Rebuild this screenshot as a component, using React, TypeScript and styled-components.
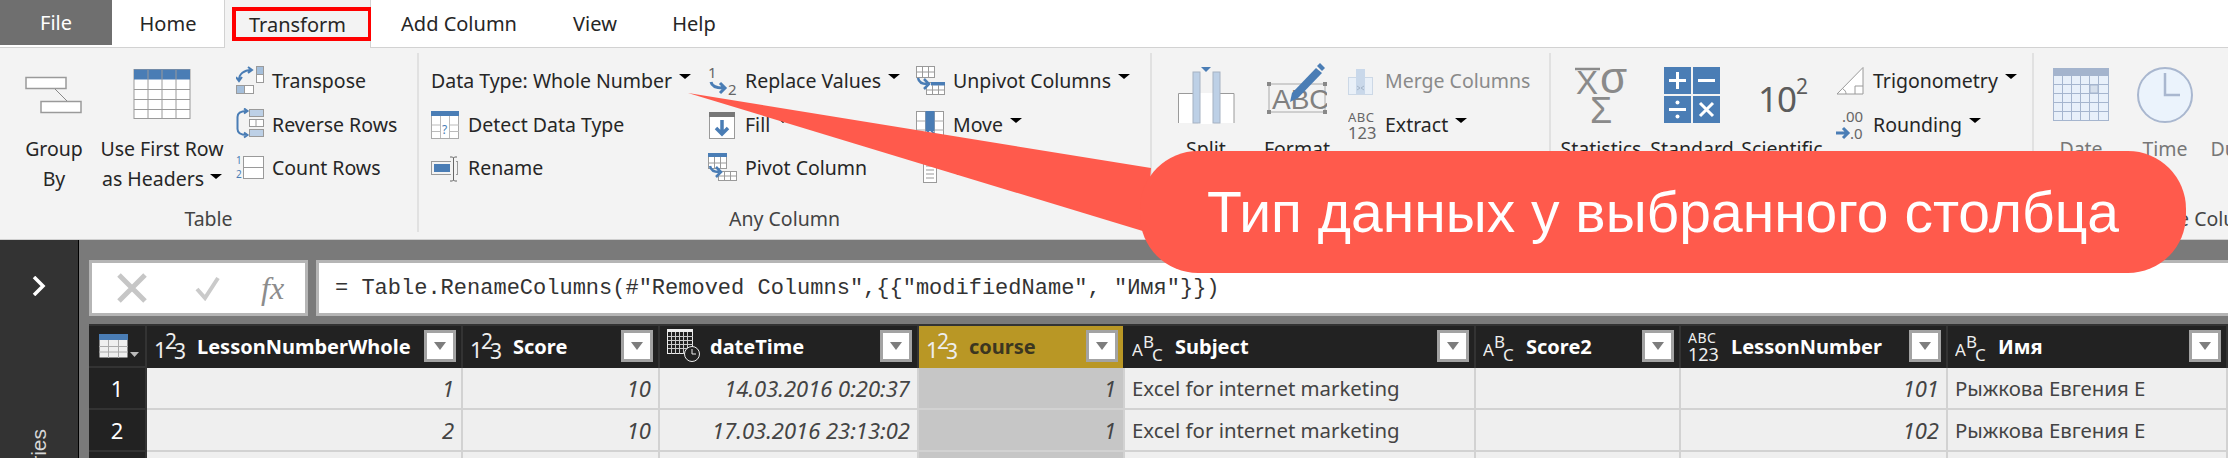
import React from 'react'
import styled, { createGlobalStyle } from 'styled-components'

const BLUE = '#4a7db5'
const PALE = '#bdd0e6'
const LINE = '#9a9a9a'

const GlobalStyle = createGlobalStyle`
  html, body { margin: 0; padding: 0; background: #fff; }
  body { font-family: "Noto Sans", "Liberation Sans", sans-serif; }
`

const Page = styled.div`
  position: relative;
  width: 2228px;
  height: 458px;
  overflow: hidden;
  display: flex;
  flex-direction: column;
  font-size: 19.5px;
  color: #262626;
`

/* ---------- tabs ---------- */

const TabBar = styled.div`
  display: flex;
  height: 47px;
  border-bottom: 1px solid #d2d2d2;
  background: #fff;
`

const Tab = styled.div<{ $w: number; $active?: boolean; $file?: boolean }>`
  position: relative;
  width: ${p => p.$w}px;
  height: ${p => (p.$file ? 45 : p.$active ? 48 : 47)}px;
  display: flex;
  align-items: center;
  justify-content: center;
  box-sizing: border-box;
  font-size: 20px;
  background: ${p => (p.$file ? '#6f6f6f' : p.$active ? '#f3f3f3' : '#fff')};
  color: ${p => (p.$file ? '#fff' : '#262626')};
  border-left: ${p => (p.$active ? '1px solid #d2d2d2' : 'none')};
  border-right: ${p => (p.$active ? '1px solid #d2d2d2' : 'none')};
`

const RedMark = styled.div`
  position: absolute;
  left: 7px;
  top: 7px;
  width: 140px;
  height: 34px;
  box-sizing: border-box;
  border: 4px solid #f00;
`

/* ---------- ribbon ---------- */

const Ribbon = styled.div`
  display: flex;
  height: 192px;
  box-sizing: border-box;
  padding-top: 5px;
  background: #f3f3f3;
  border-bottom: 1px solid #cfcfcf;
`

const Group = styled.div<{ $w: number }>`
  flex: none;
  width: ${p => p.$w}px;
  height: 179px;
  box-sizing: border-box;
  padding-top: 7px;
  border-right: 2px solid #e1e1e1;
  display: flex;
  flex-direction: column;
`

const GroupBody = styled.div<{ $pad: number }>`
  flex: 1;
  display: flex;
  padding-left: ${p => p.$pad}px;
`

const GroupLabel = styled.div`
  height: 27px;
  line-height: 28px;
  text-align: center;
  white-space: nowrap;
  color: #444;
`

const LargeButton = styled.div<{ $w: number; $muted?: boolean }>`
  flex: none;
  width: ${p => p.$w}px;
  display: flex;
  flex-direction: column;
  align-items: center;
  line-height: 30px;
  white-space: nowrap;
  text-align: center;
  color: ${p => (p.$muted ? '#777' : '#262626')};

  svg {
    display: block;
    margin-bottom: 4px;
  }
`

const SmallColumn = styled.div<{ $w?: number; $ml?: number }>`
  flex: none;
  width: ${p => (p.$w ? `${p.$w}px` : 'auto')};
  margin-left: ${p => p.$ml ?? 0}px;
  margin-top: -1px;
`

const SmallRow = styled.div<{ $muted?: boolean }>`
  height: 43.5px;
  display: flex;
  align-items: center;
  gap: 8px;
  white-space: nowrap;
  color: ${p => (p.$muted ? '#8a8a8a' : '#262626')};

  svg {
    flex: none;
    transform: translateY(1px);
  }
`

const Caret = styled.span`
  flex: none;
  display: inline-block;
  width: 0;
  height: 0;
  margin-left: -1px;
  transform: translateY(-4px);
  border-left: 6px solid transparent;
  border-right: 6px solid transparent;
  border-top: 5px solid #000;
`

const InlineCaret = styled(Caret)`
  margin-left: 6px;
  vertical-align: middle;
`

/* ---------- lower part ---------- */

const Lower = styled.div`
  flex: 1;
  min-height: 0;
  display: flex;
  background: #7a7a7a;
`

const Sidebar = styled.div`
  flex: none;
  width: 78px;
  border-right: 1px solid #000;
  background: #333;
  overflow: hidden;
  display: flex;
  flex-direction: column;
  align-items: center;
  padding-top: 36px;

  svg {
    flex: none;
    display: block;
  }
`

const QueriesLabel = styled.div`
  flex: none;
  margin-top: 133px;
  writing-mode: vertical-rl;
  transform: rotate(180deg);
  font-family: "Liberation Sans", sans-serif;
  font-size: 21px;
  line-height: 22px;
  color: #d8d8d8;
`

const Main = styled.div`
  flex: 1;
  min-width: 0;
  padding: 20px 0 0 10px;
  display: flex;
  flex-direction: column;
  gap: 8px;
`

const FormulaBar = styled.div`
  display: flex;
  gap: 8px;
  height: 56px;
  flex: none;
`

const FormulaTools = styled.div`
  flex: none;
  width: 219px;
  box-sizing: border-box;
  border: 3px solid #b5b5b5;
  background: #fff;
  display: flex;
  align-items: center;
  padding-left: 24px;
  gap: 47px;
`

const FxLabel = styled.span`
  font-family: "Liberation Serif", serif;
  font-style: italic;
  font-size: 32px;
  margin-left: -7px;
  color: #8c8c8c;
`

const FormulaInput = styled.div`
  flex: 1;
  box-sizing: border-box;
  border: 3px solid #b5b5b5;
  border-right: none;
  background: #fff;
  display: flex;
  align-items: center;
  padding-left: 16px;
  font-family: "Liberation Mono", monospace;
  font-size: 22px;
  color: #333;
  white-space: pre;
`

const Table = styled.div`
  flex: none;
  display: grid;
  grid-template-columns: 58px 316px 197px 259px 206px 351px 205px 267px 280px;
  grid-auto-rows: 42px;
  padding-top: 2px;
  background: #333;
`

const CornerCell = styled.div`
  background: #222;
  border-right: 2px solid #333;
  border-bottom: 2px solid #333;
  box-sizing: border-box;
  display: flex;
  align-items: center;
  padding-left: 10px;
`

const HeaderCell = styled.div<{ $selected?: boolean }>`
  display: flex;
  align-items: center;
  box-sizing: border-box;
  padding: 0 5px 2px 7px;
  background: ${p => (p.$selected ? '#b99725' : '#222')};
  border-right: 2px solid ${p => (p.$selected ? '#222' : '#333')};
  color: ${p => (p.$selected ? '#3b3620' : '#fff')};
  font-weight: 700;
  font-size: 20px;
  white-space: nowrap;
`

const TypeSlot = styled.span`
  flex: none;
  width: 43px;
  display: flex;
  align-items: center;
`

const HeaderName = styled.span`
  flex: 1;
  min-width: 0;
`

const FilterButton = styled.span`
  flex: none;
  width: 32px;
  height: 32px;
  box-sizing: border-box;
  border: 3px solid #a3a3a3;
  background: #fff;
  display: flex;
  align-items: center;
  justify-content: center;

  &::before {
    content: '';
    width: 0;
    height: 0;
    border-left: 6px solid transparent;
    border-right: 6px solid transparent;
    border-top: 8px solid #7d7d7d;
  }
`

const RowNumber = styled.div`
  background: #222;
  border-right: 2px solid #333;
  border-bottom: 2px solid #333;
  box-sizing: border-box;
  color: #fff;
  font-size: 22px;
  display: flex;
  align-items: center;
  justify-content: center;
`

const DataCell = styled.div<{ $num?: boolean; $selected?: boolean }>`
  box-sizing: border-box;
  background: ${p => (p.$selected ? '#c6c6c6' : '#efefef')};
  border-right: 2px solid #d2d2d2;
  border-bottom: 2px solid #d2d2d2;
  display: flex;
  align-items: center;
  justify-content: ${p => (p.$num ? 'flex-end' : 'flex-start')};
  padding: 0 7px;
  font-size: ${p => (p.$num ? 22 : 20.4)}px;
  font-style: ${p => (p.$num ? 'italic' : 'normal')};
  color: #444;
  white-space: nowrap;
`

/* ---------- callout ---------- */

const Tail = styled.svg`
  position: absolute;
  left: 0;
  top: 0;
  pointer-events: none;
`

const Bubble = styled.div`
  position: absolute;
  left: 1140px;
  top: 151px;
  width: 1046px;
  height: 122px;
  border-radius: 58px;
  background: #ff5a4c;
  color: #fff;
  font-family: "Liberation Sans", sans-serif;
  font-size: 57px;
  display: flex;
  align-items: center;
  justify-content: center;
  white-space: nowrap;
`

/* ---------- icons ---------- */

const IconText = styled.text`
  font-family: "Noto Sans", "Liberation Sans", sans-serif;
`

const GroupByIcon = () => (
  <svg width="60" height="70">
    <g fill="#fff" stroke={LINE} strokeWidth="1.5">
      <rect x="2" y="17.5" width="40" height="11" />
      <rect x="17" y="41.5" width="40" height="11" />
    </g>
    <line x1="31" y1="29" x2="43" y2="41" stroke="#888" />
  </svg>
)

const FirstRowIcon = () => (
  <svg width="58" height="70">
    <rect x="1" y="9.5" width="56" height="49" fill="#fff" stroke={LINE} />
    <rect x="1" y="9.5" width="56" height="10" fill={BLUE} />
    <path d="M15 10v48M29 10v48M43 10v48M1 29.5h56M1 39.5h56M1 49.5h56" stroke={LINE} fill="none" />
  </svg>
)

const TransposeIcon = () => (
  <svg width="28" height="34">
    <rect x="20.5" y="1.5" width="7" height="16" fill="#fff" stroke={LINE} />
    <rect x="20.5" y="1.5" width="7" height="8" fill="#a5bfdb" stroke={LINE} />
    <rect x="0.5" y="20.5" width="17" height="8" fill="#fff" stroke={LINE} />
    <rect x="0.5" y="20.5" width="8" height="8" fill="#a5bfdb" stroke={LINE} />
    <path d="M3 15C3 9 8 5 15 5M12 2l4 3-4 3M0 12l3 4 3-4" stroke={BLUE} strokeWidth="2" fill="none" />
  </svg>
)

const ReverseIcon = () => (
  <svg width="28" height="34">
    <rect x="13.5" y="1.5" width="14" height="7" fill={PALE} stroke={LINE} />
    <rect x="13.5" y="11.5" width="14" height="7" fill="#fff" stroke={LINE} />
    <line x1="20" y1="11" x2="20" y2="19" stroke={LINE} />
    <rect x="13.5" y="21.5" width="14" height="7" fill={PALE} stroke={LINE} />
    <path d="M11 3C5 3 1.500 5 1.500 9V21C1.500 25 5 27 11 27M8 0.500l3.500 2.500-3.500 2.500M8 24.500l3.500 2.500-3.500 2.500" stroke={BLUE} strokeWidth="2" fill="none" />
  </svg>
)

const CountIcon = () => (
  <svg width="28" height="34">
    <rect x="7.500" y="4.500" width="20" height="22" fill="#fff" stroke={LINE} />
    <line x1="7" y1="15.500" x2="28" y2="15.500" stroke={LINE} />
    <IconText x="0" y="12" fontSize="10" fill={BLUE}>1</IconText>
    <IconText x="0" y="26" fontSize="10" fill={BLUE}>2</IconText>
  </svg>
)

const DetectIcon = () => (
  <svg width="29" height="34">
    <rect x="0.500" y="3.500" width="27" height="27" fill="#fff" stroke="#aaa" />
    <rect x="0" y="3" width="28" height="5" fill={BLUE} />
    <path d="M9.500 8v22M18.500 8v22M1 17h27M1 23.500h27" stroke="#bbb" fill="none" />
    <rect x="10" y="14" width="8" height="12" fill="#fff" />
    <IconText x="11" y="26" fontSize="12" fill={BLUE}>?</IconText>
  </svg>
)

const RenameIcon = () => (
  <svg width="29" height="34">
    <rect x="0.500" y="9.500" width="26" height="13" fill="none" stroke={LINE} />
    <rect x="3" y="12" width="16" height="8" fill={BLUE} />
    <rect x="20" y="6" width="5" height="22" fill="#f3f3f3" />
    <path d="M19 5h2.500l1 1 1-1h2.500M22.500 6v22M19 29h2.500l1-1 1 1h2.500" stroke="#666" fill="none" />
  </svg>
)

const ReplaceIcon = () => (
  <svg width="29" height="34">
    <IconText x="0" y="13" fontSize="15" fill="#666">1</IconText>
    <IconText x="20" y="30" fontSize="15" fill="#666">2</IconText>
    <path d="M3 17c1 5 6 6 12 6M12 18l5 5-5 5" stroke={BLUE} strokeWidth="3" fill="none" />
  </svg>
)

const FillIcon = () => (
  <svg width="29" height="34">
    <rect x="1.500" y="4.500" width="25" height="26" fill="#fff" stroke={LINE} />
    <rect x="1" y="4" width="26" height="5" fill="#777" />
    <path d="M14 12v14M8 20l6 6 6-6" stroke={BLUE} strokeWidth="3.500" fill="none" />
  </svg>
)

const PivotIcon = () => (
  <svg width="29" height="34">
    <rect x="0.500" y="1.500" width="18" height="15" fill="#fff" stroke={LINE} />
    <rect x="0" y="1" width="19" height="4" fill={BLUE} />
    <path d="M6.500 5v12M12.500 5v12M1 11h18" stroke={LINE} fill="none" />
    <rect x="10.500" y="19.500" width="18" height="9" fill="#fff" stroke={LINE} />
    <path d="M16.500 20v9M22.500 20v9M11 24h18" stroke={LINE} fill="none" />
    <path d="M2 14c1 5 5 6 9 6M8 15l5 5-5 5" stroke={BLUE} strokeWidth="2.500" fill="none" />
  </svg>
)

const UnpivotIcon = () => (
  <svg width="29" height="34">
    <rect x="0.500" y="1.500" width="18" height="11" fill="#fff" stroke={LINE} />
    <path d="M6.500 2v11M12.500 2v11M1 7h18" stroke={LINE} fill="none" />
    <rect x="10.500" y="17.500" width="18" height="12" fill="#fff" stroke={LINE} />
    <rect x="15" y="17" width="14" height="3.500" fill={BLUE} />
    <path d="M16.500 20v10M22.500 20v10M11 25h18" stroke={LINE} fill="none" />
    <path d="M2 13c1 5 5 6 9 6M8 14l5 5-5 5" stroke={BLUE} strokeWidth="2.500" fill="none" />
  </svg>
)

const MoveIcon = () => (
  <svg width="29" height="34">
    <rect x="0.500" y="3.500" width="27" height="25" fill="#fff" stroke={LINE} />
    <path d="M9.500 4v25M18.500 4v25M1 13h27M1 22h27" stroke="#aaa" fill="none" />
    <rect x="9.500" y="3" width="9" height="20" fill={BLUE} />
    <path d="M14 21l-6 7h12zM3 31h22M6 28l-4 3 4 3M22 28l4 3-4 3" stroke={BLUE} strokeWidth="2" fill="none" />
  </svg>
)

const ConvertIcon = () => (
  <svg width="29" height="34">
    <rect x="7.500" y="1.500" width="13" height="29" fill="#fff" stroke={LINE} />
    <path d="M10 6h8M10 10h8M10 14h8M10 18h8M10 22h8M10 26h8" stroke="#999" fill="none" />
  </svg>
)

const SplitIcon = () => (
  <svg width="60" height="70">
    <path d="M2.500 63V33.500H58V63" fill="#fff" stroke={LINE} />
    <rect x="22" y="33" width="16" height="31" fill="#fff" />
    <rect x="17" y="12" width="7" height="51" fill={PALE} stroke="#a6b2c2" />
    <rect x="37" y="12" width="7" height="51" fill={PALE} stroke="#a6b2c2" />
    <path d="M25 7h10l-5 5z" fill={BLUE} />
  </svg>
)

const FormatIcon = () => (
  <svg width="60" height="70">
    <rect x="2" y="24" width="56" height="28" fill="none" stroke="#aaa" />
    <g fill="#888">
      <rect x="0" y="22" width="4" height="4" />
      <rect x="56" y="22" width="4" height="4" />
      <rect x="0" y="50" width="4" height="4" />
      <rect x="56" y="50" width="4" height="4" />
    </g>
    <text x="5" y="49" fontFamily="Liberation Sans" fontSize="28" fill="#808080">ABC</text>
    <path d="M25 33l24-25 6 5-24 25-8 4z" fill={BLUE} />
    <path d="M50 6l3-3 5 5-3 3z" fill={BLUE} />
  </svg>
)

const MergeIcon = () => (
  <svg width="29" height="34">
    <rect x="0.500" y="12.500" width="24" height="17" fill="#e9f0f8" stroke="#ccd8e6" />
    <rect x="8" y="4" width="9" height="25" fill="#c9d8ea" />
    <path d="M9 21l3 2-3 2M16 21l-3 2 3 2" stroke="#a6b6c9" fill="none" />
  </svg>
)

const ExtractIcon = () => (
  <svg width="29" height="34">
    <IconText x="0" y="14" fontSize="13" fill="#666" letterSpacing="0.500">ABC</IconText>
    <IconText x="0" y="31" fontSize="16.500" fill="#666">123</IconText>
  </svg>
)

const StatisticsIcon = () => (
  <svg width="60" height="70">
    <path d="M4 9h25" stroke="#8a8a8a" strokeWidth="2.500" />
    <text x="5" y="34" fontFamily="Liberation Sans" fontSize="33" fill="#8a8a8a">X</text>
    <text x="29" y="33" fontFamily="Liberation Sans" fontSize="44" fill="#8a8a8a">σ</text>
    <text x="19" y="63" fontFamily="Liberation Sans" fontSize="36" fill="#8a8a8a">Σ</text>
  </svg>
)

const StandardIcon = () => (
  <svg width="58" height="70">
    <rect x="1" y="7" width="27" height="27" fill={BLUE} />
    <rect x="30" y="7" width="27" height="27" fill={BLUE} />
    <rect x="1" y="36" width="27" height="27" fill={BLUE} />
    <rect x="30" y="36" width="27" height="27" fill={BLUE} />
    <g stroke="#fff" strokeWidth="3" fill="none">
      <path d="M14.500 12v17M6 20.500h17M35 20.500h17M6 49.500h17M37 43l13 13M50 43L37 56" />
    </g>
    <circle cx="14.500" cy="42.500" r="2" fill="#fff" />
    <circle cx="14.500" cy="56.500" r="2" fill="#fff" />
  </svg>
)

const ScientificIcon = () => (
  <svg width="60" height="70">
    <text x="6" y="52" fontFamily="Noto Sans" fontSize="35" fill="#5c5c5c" letterSpacing="-1">10</text>
    <text x="44" y="34" fontFamily="Noto Sans" fontSize="21" fill="#5c5c5c">2</text>
  </svg>
)

const TrigIcon = () => (
  <svg width="29" height="34">
    <path d="M1 29L27 2.500V29z" fill="#fff" stroke={LINE} />
    <path d="M7 24c2 1 3 3 3 5M19 21h8M19 21v8" stroke={LINE} fill="none" />
  </svg>
)

const RoundingIcon = () => (
  <svg width="29" height="34">
    <IconText x="6" y="14" fontSize="15" fill="#666">.00</IconText>
    <IconText x="14" y="31" fontSize="15" fill="#666">.0</IconText>
    <path d="M0 25h11M7 20l5 5-5 5" stroke={BLUE} strokeWidth="3" fill="none" />
  </svg>
)

const DateIcon = () => (
  <svg width="56" height="70">
    <rect x="0.500" y="8.500" width="55" height="52" fill="#e8f0fa" stroke="#a5b5ce" />
    <rect x="0" y="8" width="56" height="8" fill="#a4b4cd" />
    <path d="M9.500 16v44M18.500 16v44M27.500 16v44M36.500 16v44M45.500 16v44M1 24.500h54M1 33.500h54M1 42.500h54M1 51.500h54" stroke="#a5b5ce" fill="none" />
    <rect x="37" y="25" width="8" height="8" fill="#d5dfec" stroke="#a5b5ce" />
  </svg>
)

const TimeIcon = () => (
  <svg width="58" height="70">
    <circle cx="29" cy="35" r="27" fill="#ebf3fc" stroke="#a9b7cf" strokeWidth="2" />
    <path d="M29 13v22h15" stroke="#a9b7cf" strokeWidth="2.500" fill="none" />
  </svg>
)

const DurationIcon = () => <svg width="58" height="70" />

const CrossIcon = () => (
  <svg width="32" height="32">
    <path d="M3 3l26 26M29 3L3 29" stroke="#c6c6c6" strokeWidth="5" fill="none" />
  </svg>
)

const CheckIcon = () => (
  <svg width="26" height="26">
    <path d="M2 14l8 9L23 3" stroke="#cacaca" strokeWidth="4" fill="none" />
  </svg>
)

const ChevronIcon = () => (
  <svg width="14" height="20">
    <path d="M2 1l9 9-9 9" stroke="#fff" strokeWidth="3.500" fill="none" />
  </svg>
)

const TableMenuIcon = () => (
  <svg width="40" height="30">
    <rect x="0.500" y="3.500" width="28" height="23" fill="#efefef" />
    <rect x="0" y="3" width="29" height="6" fill={BLUE} />
    <path d="M9.500 9v18M19.500 9v18M0 15.500h29M0 21h29" stroke="#aaa" fill="none" />
    <path d="M31 21h9l-4.500 5z" fill="#bbb" />
  </svg>
)

const NumberType = () => (
  <svg width="32" height="32">
    <IconText x="0" y="28" fontSize="22" fontWeight="400" fill="#eee">1</IconText>
    <IconText x="11" y="19" fontSize="21" fontWeight="400" fill="#eee">2</IconText>
    <IconText x="20" y="29" fontSize="21" fontWeight="400" fill="#eee">3</IconText>
  </svg>
)

const TextType = () => (
  <svg width="32" height="32">
    <IconText x="0" y="26" fontSize="17" fontWeight="400" fill="#eee">A</IconText>
    <IconText x="11" y="18" fontSize="17" fontWeight="400" fill="#eee">B</IconText>
    <IconText x="20" y="31" fontSize="17" fontWeight="400" fill="#eee">C</IconText>
  </svg>
)

const AnyType = () => (
  <svg width="32" height="34">
    <IconText x="0" y="14" fontSize="14" fontWeight="400" fill="#eee" letterSpacing="0.500">ABC</IconText>
    <IconText x="0" y="32" fontSize="18" fontWeight="400" fill="#eee">123</IconText>
  </svg>
)

const DateTimeType = () => (
  <svg width="34" height="34">
    <rect x="0.500" y="0.500" width="25" height="24" fill="none" stroke="#eee" />
    <rect x="0" y="0" width="26" height="3" fill="#eee" />
    <path d="M4.500 3v22M8.500 3v22M12.500 3v22M16.500 3v22M20.500 3v22M1 7.500h25M1 11.500h25M1 15.500h25M1 19.500h25" stroke="#ccc" strokeWidth="1" fill="none" />
    <circle cx="25" cy="25" r="7.500" fill="#222" stroke="#eee" />
    <path d="M25 20v5h4" stroke="#eee" fill="none" />
  </svg>
)

/* ---------- data ---------- */

const columns = [
  { name: 'LessonNumberWhole', Type: NumberType },
  { name: 'Score', Type: NumberType },
  { name: 'dateTime', Type: DateTimeType },
  { name: 'course', Type: NumberType, selected: true },
  { name: 'Subject', Type: TextType },
  { name: 'Score2', Type: TextType },
  { name: 'LessonNumber', Type: AnyType },
  { name: 'Имя', Type: TextType },
]

const rows = [
  ['1', '10', '14.03.2016 0:20:37', '1', 'Excel for internet marketing', '', '101', 'Рыжкова Евгения Е'],
  ['2', '10', '17.03.2016 23:13:02', '1', 'Excel for internet marketing', '', '102', 'Рыжкова Евгения Е'],
  ['', '', '', '', '', '', '', ''],
]

const numericColumns = [0, 1, 2, 3, 6]

export default function App() {
  return (
    <Page>
      <GlobalStyle />
      <TabBar>
        <Tab $w={112} $file>File</Tab>
        <Tab $w={112}>Home</Tab>
        <Tab $w={147} $active>
          Transform
          <RedMark />
        </Tab>
        <Tab $w={176}>Add Column</Tab>
        <Tab $w={96}>View</Tab>
        <Tab $w={102}>Help</Tab>
      </TabBar>

      <Ribbon>
        <Group $w={419}>
          <GroupBody $pad={14}>
            <LargeButton $w={80}><GroupByIcon />Group<br />By</LargeButton>
            <LargeButton $w={136}>
              <FirstRowIcon />
              <span>Use First Row<br />as Headers<InlineCaret /></span>
            </LargeButton>
            <SmallColumn $ml={6}>
              <SmallRow><TransposeIcon />Transpose</SmallRow>
              <SmallRow><ReverseIcon />Reverse Rows</SmallRow>
              <SmallRow><CountIcon />Count Rows</SmallRow>
            </SmallColumn>
          </GroupBody>
          <GroupLabel>Table</GroupLabel>
        </Group>

        <Group $w={733}>
          <GroupBody $pad={12}>
            <SmallColumn $w={277}>
              <SmallRow>Data Type: Whole Number <Caret /></SmallRow>
              <SmallRow><DetectIcon />Detect Data Type</SmallRow>
              <SmallRow><RenameIcon />Rename</SmallRow>
            </SmallColumn>
            <SmallColumn $w={208}>
              <SmallRow><ReplaceIcon />Replace Values <Caret /></SmallRow>
              <SmallRow><FillIcon />Fill <Caret /></SmallRow>
              <SmallRow><PivotIcon />Pivot Column</SmallRow>
            </SmallColumn>
            <SmallColumn>
              <SmallRow><UnpivotIcon />Unpivot Columns <Caret /></SmallRow>
              <SmallRow><MoveIcon />Move <Caret /></SmallRow>
              <SmallRow><ConvertIcon />Convert to List</SmallRow>
            </SmallColumn>
          </GroupBody>
          <GroupLabel>Any Column</GroupLabel>
        </Group>

        <Group $w={399}>
          <GroupBody $pad={14}>
            <LargeButton $w={80}><SplitIcon />Split<br />Column</LargeButton>
            <LargeButton $w={102}><FormatIcon />Format</LargeButton>
            <SmallColumn>
              <SmallRow $muted><MergeIcon />Merge Columns</SmallRow>
              <SmallRow><ExtractIcon />Extract <Caret /></SmallRow>
            </SmallColumn>
          </GroupBody>
          <GroupLabel>Text Column</GroupLabel>
        </Group>

        <Group $w={483}>
          <GroupBody $pad={10}>
            <LargeButton $w={80}><StatisticsIcon />Statistics</LargeButton>
            <LargeButton $w={102}><StandardIcon />Standard</LargeButton>
            <LargeButton $w={78}><ScientificIcon />Scientific</LargeButton>
            <SmallColumn $ml={15}>
              <SmallRow><TrigIcon />Trigonometry <Caret /></SmallRow>
              <SmallRow><RoundingIcon />Rounding <Caret /></SmallRow>
            </SmallColumn>
          </GroupBody>
          <GroupLabel>Number Column</GroupLabel>
        </Group>

        <Group $w={276}>
          <GroupBody $pad={7}>
            <LargeButton $w={80} $muted><DateIcon />Date</LargeButton>
            <LargeButton $w={88} $muted><TimeIcon />Time</LargeButton>
            <LargeButton $w={84} $muted><DurationIcon />Duration</LargeButton>
          </GroupBody>
          <GroupLabel>Date &amp; Time Column</GroupLabel>
        </Group>
      </Ribbon>

      <Lower>
        <Sidebar>
          <ChevronIcon />
          <QueriesLabel>Queries</QueriesLabel>
        </Sidebar>
        <Main>
          <FormulaBar>
            <FormulaTools>
              <CrossIcon />
              <CheckIcon />
              <FxLabel>fx</FxLabel>
            </FormulaTools>
            <FormulaInput>= Table.RenameColumns(#"Removed Columns",{'{{'}"modifiedName", "Имя"{'}})'}</FormulaInput>
          </FormulaBar>
          <Table>
            <CornerCell><TableMenuIcon /></CornerCell>
            {columns.map(col => (
              <HeaderCell key={col.name} $selected={col.selected}>
                <TypeSlot><col.Type /></TypeSlot>
                <HeaderName>{col.name}</HeaderName>
                <FilterButton />
              </HeaderCell>
            ))}
            {rows.map((row, r) => (
              <React.Fragment key={r}>
                <RowNumber>{r < 2 ? r + 1 : ''}</RowNumber>
                {row.map((value, c) => (
                  <DataCell key={c} $num={numericColumns.includes(c)} $selected={c === 3}>
                    {value}
                  </DataCell>
                ))}
              </React.Fragment>
            ))}
          </Table>
        </Main>
      </Lower>

      <Tail width="2228" height="458">
        <polygon points="688,93 1151,168 1146,232" fill="#ff5a4c" />
      </Tail>
      <Bubble>Тип данных у выбранного столбца</Bubble>
    </Page>
  )
}
